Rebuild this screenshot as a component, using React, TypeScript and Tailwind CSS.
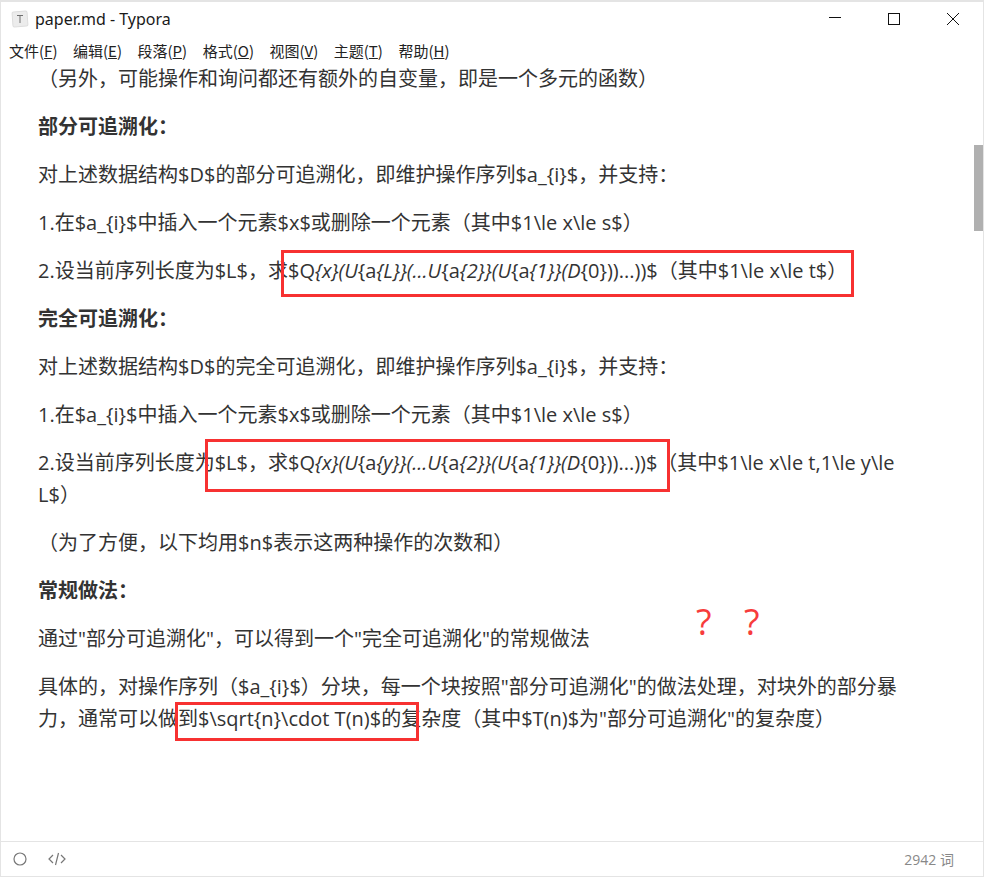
import React from "react";

const body = "[font-family:'Open_Sans','Noto_Sans_CJK_SC',sans-serif]";

function Para({ children, className = "" }: { children: React.ReactNode; className?: string }) {
  return <p className={`mb-4 ${className}`}>{children}</p>;
}

function RedBox({ className }: { className: string }) {
  return <div className={`absolute border-[3px] border-[#f73131] ${className}`} />;
}

const menus: [string, string][] = [
  ["文件", "F"],
  ["编辑", "E"],
  ["段落", "P"],
  ["格式", "O"],
  ["视图", "V"],
  ["主题", "T"],
  ["帮助", "H"],
];

export default function App() {
  return (
    <div className="relative flex h-[877px] w-[984px] flex-col overflow-hidden border-x border-t-2 border-b border-x-[#e4e4e4] border-t-[#e4e4e4] border-b-[#e4e4e4] bg-white [font-family:'Open_Sans','Noto_Sans_CJK_SC',sans-serif]">
      <header className="flex h-[34px] shrink-0 items-center pl-[10px]">
        <svg width="18" height="18" viewBox="0 0 18 18" className="mr-[6px] shrink-0">
          <rect x="1.5" y="1.5" width="15" height="15" rx="1.5" fill="#ececec" stroke="#dddddd" transform="rotate(-4 9 9)" />
          <path d="M6 5.5h6M9 5.5v7.5" stroke="#707070" strokeWidth="1" fill="none" />
        </svg>
        <span className="text-[16px] text-[#1a1a1a] [font-family:'Noto_Sans',sans-serif]">paper.md - Typora</span>
        <div className="ml-auto flex items-center gap-[45px] pr-[23px]">
          <svg width="14" height="14" viewBox="0 0 14 14"><path d="M1 5.5h12" stroke="#111" strokeWidth="1" /></svg>
          <svg width="14" height="14" viewBox="0 0 14 14"><rect x="1.5" y="1.5" width="11" height="11" stroke="#111" strokeWidth="1" fill="none" /></svg>
          <svg width="14" height="14" viewBox="0 0 14 14"><path d="M1 1l12 12M13 1L1 13" stroke="#111" strokeWidth="1" /></svg>
        </div>
      </header>
      <nav className="flex h-[27px] shrink-0 items-center gap-[15.5px] pl-[8px] pt-[4px] text-[15px] text-[#222] [font-family:'Noto_Sans_CJK_SC',sans-serif]">
        {menus.map(([name, key]) => (
          <span key={key}>
            {name}(<span className="underline">{key}</span>)
          </span>
        ))}
      </nav>
      <main className={`min-h-0 flex-1 pl-[37px] pr-[80px] text-[20px] leading-[32px] text-[#333] ${body}`}>
        <Para>（另外，可能操作和询问都还有额外的自变量，即是一个多元的函数）</Para>
        <Para className="font-bold">部分可追溯化：</Para>
        <Para>对上述数据结构$D$的部分可追溯化，即维护操作序列$a_{"{i}"}$，并支持：</Para>
        <Para>1.在$a_{"{i}"}$中插入一个元素$x$或删除一个元素（其中$1\le x\le s$）</Para>
        <Para>
          2.设当前序列长度为$L$，求$Q<i>{"{x}"}(U</i>{"{a"}<i>{"{L}}"}(...U</i>{"{a"}<i>{"{2}}"}(U</i>{"{a"}<i>{"{1}}"}(D</i>{"{0}"}))...))$（其中$1\le x\le t$）
        </Para>
        <Para className="font-bold">完全可追溯化：</Para>
        <Para>对上述数据结构$D$的完全可追溯化，即维护操作序列$a_{"{i}"}$，并支持：</Para>
        <Para>1.在$a_{"{i}"}$中插入一个元素$x$或删除一个元素（其中$1\le x\le s$）</Para>
        <Para>
          2.设当前序列长度为$L$，求$Q<i>{"{x}"}(U</i>{"{a"}<i>{"{y}}"}(...U</i>{"{a"}<i>{"{2}}"}(U</i>{"{a"}<i>{"{1}}"}(D</i>{"{0}"}))...))$（其中$1\le x\le t,1\le y\le L$）
        </Para>
        <Para>（为了方便，以下均用$n$表示这两种操作的次数和）</Para>
        <Para className="font-bold">常规做法：</Para>
        <Para>通过"部分可追溯化"，可以得到一个"完全可追溯化"的常规做法</Para>
        <Para>具体的，对操作序列（$a_{"{i}"}$）分块，每一个块按照"部分可追溯化"的做法处理，对块外的部分暴力，通常可以做到$\sqrt{"{n}"}\cdot T(n)$的复杂度（其中$T(n)$为"部分可追溯化"的复杂度）</Para>
      </main>
      <footer className="flex h-[35px] shrink-0 items-center border-t border-[#e4e4e4] pl-[11px] pr-[29px]">
        <svg width="16" height="16" viewBox="0 0 16 16" className="mr-[19px]"><circle cx="8" cy="8" r="6" stroke="#777" strokeWidth="1.2" fill="none" /></svg>
        <svg width="20" height="16" viewBox="0 0 20 16"><path d="M6 4L2 8l4 4M14 4l4 4-4 4M11.5 2l-3 12" stroke="#777" strokeWidth="1.2" fill="none" /></svg>
        <span className="ml-auto text-[14px] text-[#888]">2942 词</span>
      </footer>

      <div className="absolute left-[973px] top-[143px] h-[86px] w-[9px] bg-[#b0b0b0]" />
      <RedBox className="left-[280px] top-[248px] h-[47px] w-[573px]" />
      <RedBox className="left-[204px] top-[437px] h-[53px] w-[465px]" />
      <RedBox className="left-[174px] top-[700px] h-[39px] w-[244px]" />
      <span className="absolute left-[695px] top-[596px] text-[36px] leading-[48px] text-[#f73c3c]">?</span>
      <span className="absolute left-[743px] top-[596px] text-[36px] leading-[48px] text-[#f73c3c]">?</span>
    </div>
  );
}
